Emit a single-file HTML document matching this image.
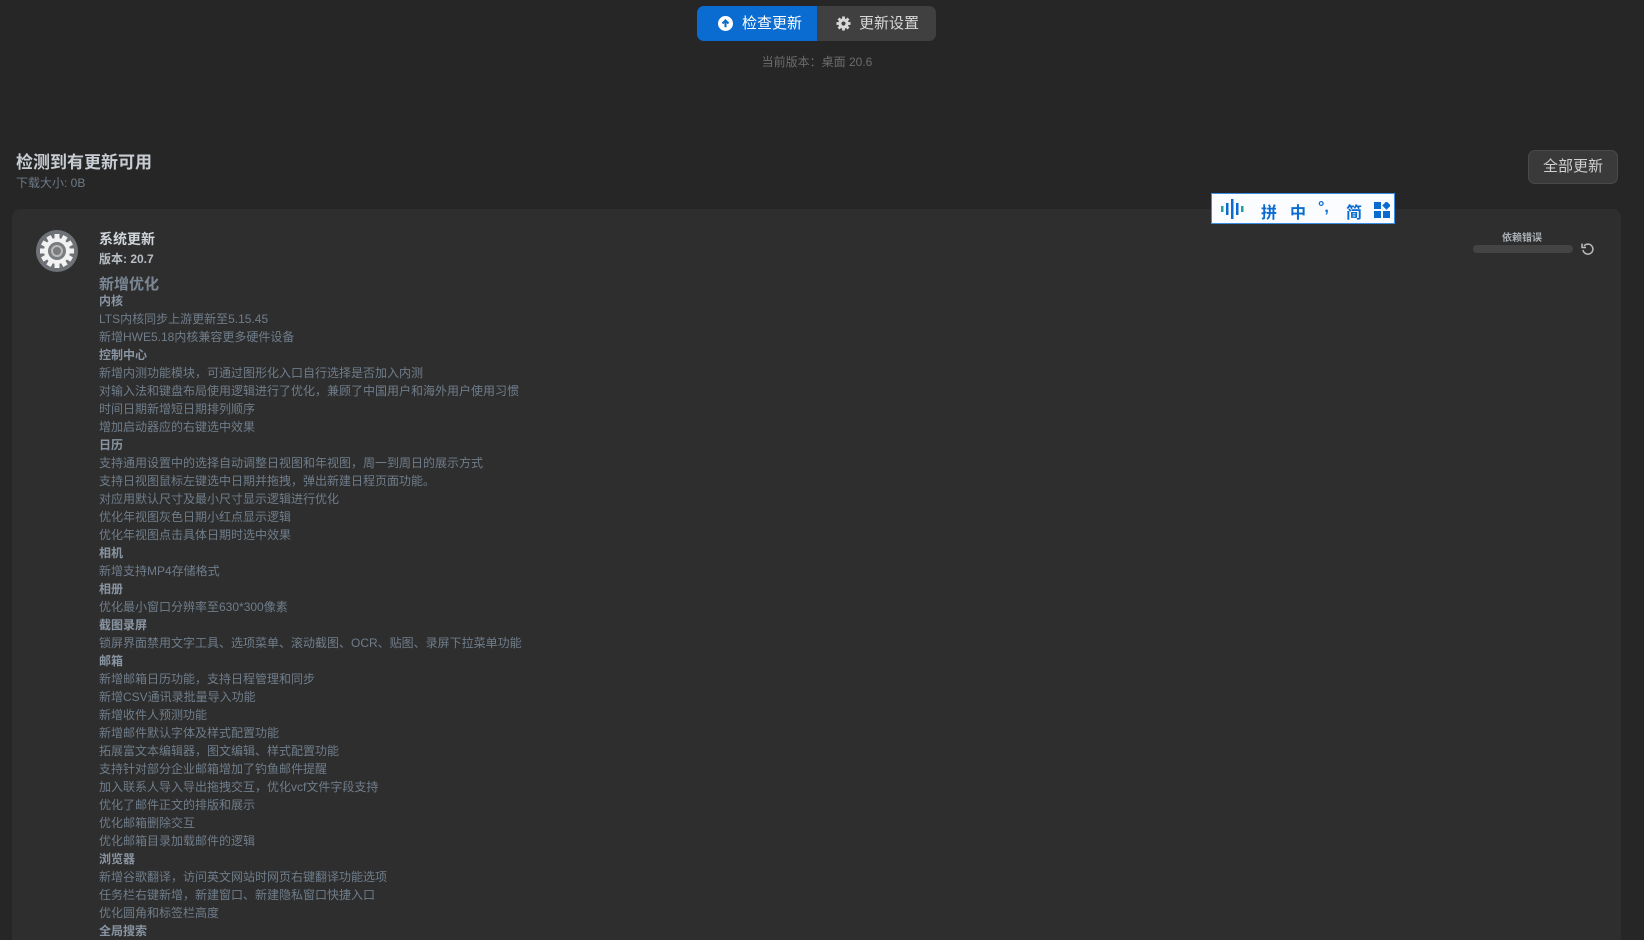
<!DOCTYPE html>
<html><head><meta charset="utf-8"><style>
*{margin:0;padding:0;box-sizing:border-box}
html,body{width:1644px;height:940px;overflow:hidden}
body{background:#262626;font-family:"Liberation Sans","Noto Sans CJK SC",sans-serif;position:relative}
.tog{position:absolute;left:697px;top:6px;width:239px;height:35px;border-radius:7px;background:#404040;overflow:hidden}
.tog .a{position:absolute;left:0;top:0;width:120px;height:35px;background:#0a6bd1;color:#fff;font-size:15px;line-height:35px;padding-left:45px}
.tog .b{position:absolute;left:120px;top:0;width:119px;height:35px;color:#d8d8d8;font-size:15px;line-height:35px;padding-left:42px}
.ver{position:absolute;left:0;width:1634px;top:53px;text-align:center;color:#6c6c6c;font-size:12px}
.h1{position:absolute;left:16px;top:148px;color:#c8cdd3;font-size:17px;font-weight:bold}
.sz{position:absolute;left:16px;top:174px;color:#6d7986;font-size:12px}
.all{position:absolute;left:1528px;top:150px;width:90px;height:34px;border-radius:7px;background:#3a3a3a;border:1px solid #4a4a4a;color:#d0d0d0;font-size:15px;text-align:center;line-height:32px}
.card{position:absolute;left:12px;top:209px;width:1609px;height:731px;background:#2e2e2e;border-radius:8px 8px 0 0}
.ime{position:absolute;left:1211px;top:193px;width:184px;height:31px;background:#fafcff;border:1px solid #3a8ee6;color:#0a6bd1;font-size:16px;font-weight:bold}
.ime span{position:absolute;top:5px}
.t1{position:absolute;left:99px;top:229px;color:#d0d5da;font-size:14px;font-weight:bold}
.t2{position:absolute;left:99px;top:250px;color:#b8bec4;font-size:12px;font-weight:bold}
.t3{position:absolute;left:99px;top:273px;color:#7b8794;font-size:15px;font-weight:bold}
.list{position:absolute;left:99px;top:292px;font-size:12px;line-height:18px;color:#6f7d8b}
.list b{color:#8995a2}
.dep{position:absolute;left:1490px;top:229px;color:#aab0b6;font-size:10px;font-weight:bold;width:64px;text-align:center}
.bar{position:absolute;left:1473px;top:245px;width:100px;height:8px;border-radius:4px;background:#444}
</style></head><body>
<div class="tog"><div class="a"><svg style="position:absolute;left:21px;top:10px" width="15" height="15" viewBox="0 0 16 16"><circle cx="8" cy="8" r="8" fill="#fff"/><path d="M8 12V5M4.8 8L8 4.8 11.2 8" stroke="#0a6bd1" stroke-width="2.2" fill="none"/></svg>检查更新</div><div class="b"><svg style="position:absolute;left:19px;top:10px" width="15" height="15" viewBox="0 0 16 16"><g fill="#d8d8d8"><circle cx="8" cy="8" r="5.5"/><rect x="6.5" y="0.5" width="3" height="15"/><rect x="0.5" y="6.5" width="15" height="3"/><rect x="6.5" y="0.5" width="3" height="15" transform="rotate(45 8 8)"/><rect x="6.5" y="0.5" width="3" height="15" transform="rotate(-45 8 8)"/></g><circle cx="8" cy="8" r="2.2" fill="#404040"/></svg>更新设置</div></div>
<div class="ver">当前版本：桌面 20.6</div>
<div class="h1">检测到有更新可用</div>
<div class="sz">下载大小: 0B</div>
<div class="all">全部更新</div>
<div class="card"></div>
<svg style="position:absolute;left:35px;top:229px" width="44" height="44" viewBox="0 0 44 44"><circle cx="22" cy="22" r="21" fill="#6e7276"/><g fill="#f2f2f2"><circle cx="22" cy="22" r="13"/><g id="t"><rect x="19.5" y="5" width="5" height="34"/></g><use href="#t" transform="rotate(30 22 22)"/><use href="#t" transform="rotate(60 22 22)"/><use href="#t" transform="rotate(90 22 22)"/><use href="#t" transform="rotate(120 22 22)"/><use href="#t" transform="rotate(150 22 22)"/></g><circle cx="22" cy="22" r="9" fill="#7a7d80"/><circle cx="22" cy="22" r="5" fill="none" stroke="#bbb" stroke-width="2"/></svg>
<div class="t1">系统更新</div>
<div class="t2">版本: 20.7</div>
<div class="t3">新增优化</div>
<div class="list">
<b>内核</b><br>LTS内核同步上游更新至5.15.45<br>新增HWE5.18内核兼容更多硬件设备<br><b>控制中心</b><br>新增内测功能模块，可通过图形化入口自行选择是否加入内测<br>对输入法和键盘布局使用逻辑进行了优化，兼顾了中国用户和海外用户使用习惯<br>时间日期新增短日期排列顺序<br>增加启动器应的右键选中效果<br><b>日历</b><br>支持通用设置中的选择自动调整日视图和年视图，周一到周日的展示方式<br>支持日视图鼠标左键选中日期并拖拽，弹出新建日程页面功能。<br>对应用默认尺寸及最小尺寸显示逻辑进行优化<br>优化年视图灰色日期小红点显示逻辑<br>优化年视图点击具体日期时选中效果<br><b>相机</b><br>新增支持MP4存储格式<br><b>相册</b><br>优化最小窗口分辨率至630*300像素<br><b>截图录屏</b><br>锁屏界面禁用文字工具、选项菜单、滚动截图、OCR、贴图、录屏下拉菜单功能<br><b>邮箱</b><br>新增邮箱日历功能，支持日程管理和同步<br>新增CSV通讯录批量导入功能<br>新增收件人预测功能<br>新增邮件默认字体及样式配置功能<br>拓展富文本编辑器，图文编辑、样式配置功能<br>支持针对部分企业邮箱增加了钓鱼邮件提醒<br>加入联系人导入导出拖拽交互，优化vcf文件字段支持<br>优化了邮件正文的排版和展示<br>优化邮箱删除交互<br>优化邮箱目录加载邮件的逻辑<br><b>浏览器</b><br>新增谷歌翻译，访问英文网站时网页右键翻译功能选项<br>任务栏右键新增，新建窗口、新建隐私窗口快捷入口<br>优化圆角和标签栏高度<br><b>全局搜索</b>
</div>
<div class="dep">依赖错误</div>
<div class="bar"></div>
<svg style="position:absolute;left:1581px;top:242px" width="14" height="14" viewBox="0 0 14 14"><path d="M3 4A5 5 0 1 1 2 8" fill="none" stroke="#bbb" stroke-width="1.5"/><path d="M1 1.5V5.5H5" fill="none" stroke="#bbb" stroke-width="1.5"/></svg>
<div class="ime">
<svg style="position:absolute;left:8px;top:4px" width="24" height="22" viewBox="0 0 24 22"><rect x="1" y="8" width="2.5" height="6" fill="#1aa39a"/><rect x="6" y="5" width="2.5" height="12" fill="#0a6bd1"/><rect x="11" y="1" width="2.5" height="20" fill="#0a6bd1"/><rect x="16" y="5" width="2.5" height="12" fill="#0a6bd1"/><rect x="21" y="8" width="2.5" height="6" fill="#1aa39a"/></svg>
<span style="left:49px">拼</span><span style="left:78px">中</span><span style="left:106px">°,</span><span style="left:134px">简</span>
<svg style="position:absolute;left:162px;top:8px" width="16" height="16" viewBox="0 0 16 16" fill="#0a6bd1"><rect x="0" y="0" width="7" height="7"/><rect x="0" y="9" width="7" height="7"/><rect x="9" y="9" width="7" height="7"/><rect x="9.5" y="0.5" width="6" height="6" transform="rotate(45 12.5 3.5)"/></svg>
</div>
</body></html>
